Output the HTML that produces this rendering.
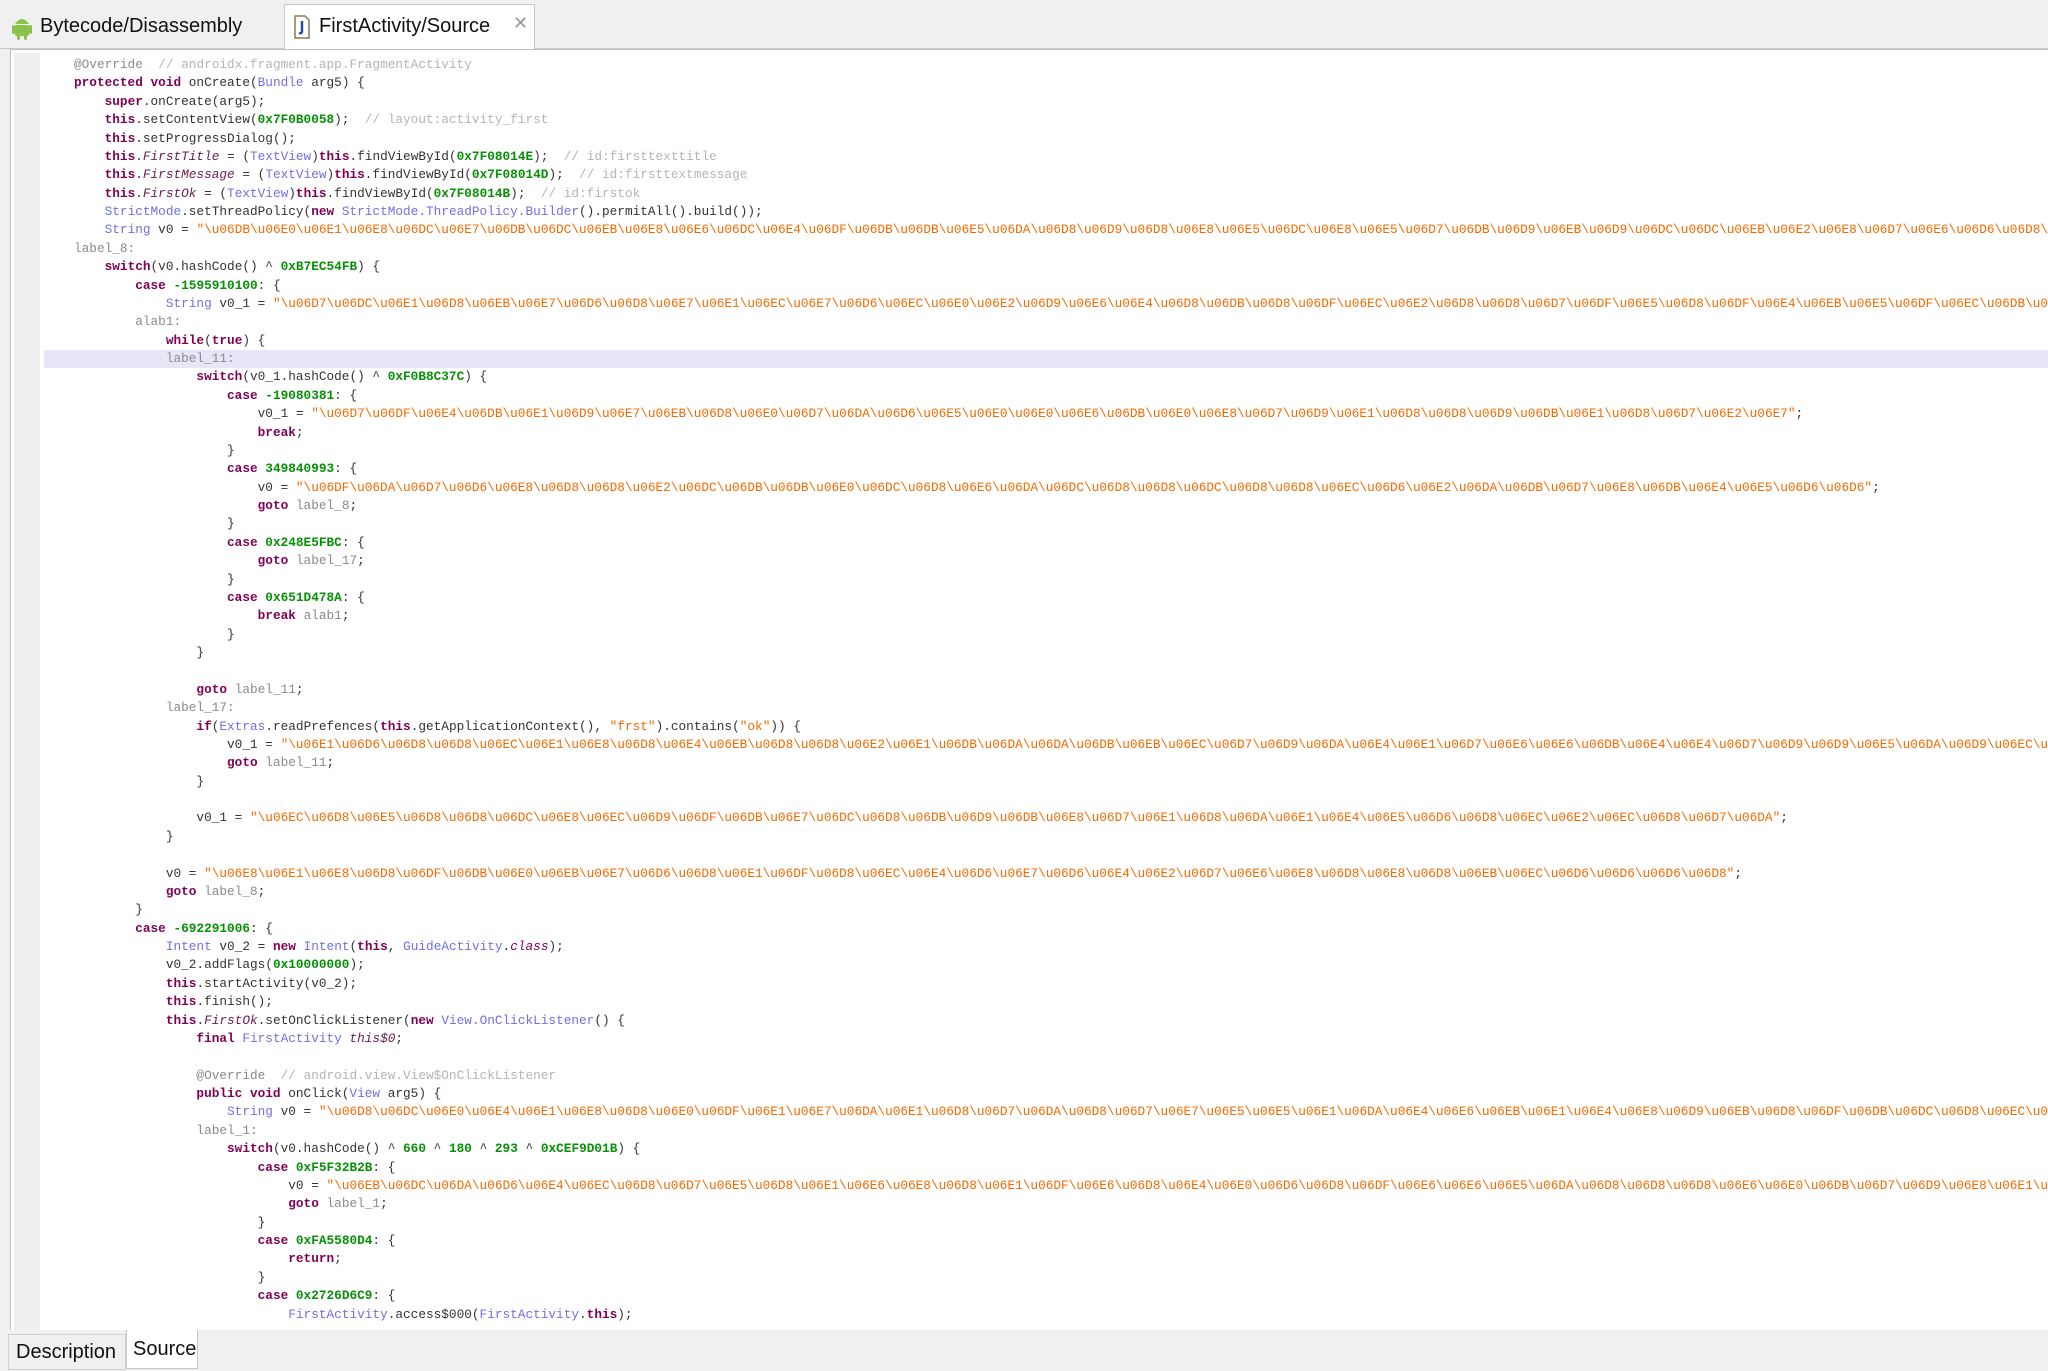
<!DOCTYPE html>
<html><head><meta charset="utf-8">
<style>
html,body{margin:0;padding:0;width:2048px;height:1371px;overflow:hidden;background:#f0f0f0;font-family:"Liberation Sans",sans-serif;}
#tabs{position:absolute;left:0;top:0;width:2048px;height:48px;background:#f0f0f0;border-bottom:1px solid #c8c8c8;}
.tab{position:absolute;top:5px;height:42px;font-size:20px;color:#111;line-height:42px;}
#t1{left:10px;width:272px;}
#t2{left:284px;width:249px;background:#fff;border:1px solid #c8c8c8;border-bottom:none;top:4px;height:44px;}
#editor{position:absolute;left:10px;top:49px;width:2040px;height:1281px;background:#fff;border:1px solid #c0c0c0;border-right:none;overflow:hidden;}
#gutter{position:absolute;left:3px;top:3px;width:26px;height:1278px;background:#efefef;}
#hl{position:absolute;left:33px;top:300px;width:2010px;height:18.4px;background:#e6e6f8;}
pre{position:absolute;left:63px;top:6px;margin:0;font-family:"Liberation Mono",monospace;font-size:12.75px;line-height:18.38px;color:#333;white-space:pre;}
.k{color:#7f0055;font-weight:bold}
.t{color:#6f6fe6}
.n{color:#079007;font-weight:bold}
.s{color:#f36a00}
.c{color:#b4b4b4}
.l{color:#8a8a8a}
.f{color:#6a2050;font-style:italic}
#btabs{position:absolute;left:0;top:1330px;width:2048px;height:41px;background:#f0f0f0;}
.bt{position:absolute;top:4px;height:34px;line-height:34px;font-size:20px;color:#111;}
</style></head><body>
<div id="tabs">
 <div class="tab" id="t1">
  <svg style="position:absolute;left:2px;top:9px" width="20" height="26" viewBox="0 0 20 26"><path d="M3 10 Q10 0 17 10 Z" fill="#8bc34a"/><rect x="3" y="11" width="14" height="11" rx="2" fill="#8bc34a"/><rect x="0" y="11" width="3" height="9" rx="1.5" fill="#8bc34a"/><rect x="17" y="11" width="3" height="9" rx="1.5" fill="#8bc34a"/><rect x="5" y="20" width="3" height="6" rx="1.5" fill="#8bc34a"/><rect x="12" y="20" width="3" height="6" rx="1.5" fill="#8bc34a"/></svg>
  <span style="position:absolute;left:30px">Bytecode/Disassembly</span></div>
 <div class="tab" id="t2">
  <svg style="position:absolute;left:8px;top:10px" width="18" height="24" viewBox="0 0 18 24"><path d="M2 1 H12 L16 5 V23 H2 Z" fill="#fff" stroke="#8a7a50" stroke-width="1.5"/><path d="M9 6 V16 Q9 19 6 18" fill="none" stroke="#2a4aa0" stroke-width="2.5"/></svg>
  <span style="position:absolute;left:34px">FirstActivity/Source</span>
  <span style="position:absolute;left:228px;top:-3px;font-size:18px;color:#999">✕</span></div>
</div>
<div id="editor">
<div id="gutter"></div>
<div id="hl"></div>
<pre><span class="l">@Override</span>  <span class="c">// androidx.fragment.app.FragmentActivity</span>
<span class="k">protected void</span> onCreate(<span class="t">Bundle</span> arg5) {
    <span class="k">super</span>.onCreate(arg5);
    <span class="k">this</span>.setContentView(<span class="n">0x7F0B0058</span>);  <span class="c">// layout:activity_first</span>
    <span class="k">this</span>.setProgressDialog();
    <span class="k">this</span>.<span class="f">FirstTitle</span> = (<span class="t">TextView</span>)<span class="k">this</span>.findViewById(<span class="n">0x7F08014E</span>);  <span class="c">// id:firsttexttitle</span>
    <span class="k">this</span>.<span class="f">FirstMessage</span> = (<span class="t">TextView</span>)<span class="k">this</span>.findViewById(<span class="n">0x7F08014D</span>);  <span class="c">// id:firsttextmessage</span>
    <span class="k">this</span>.<span class="f">FirstOk</span> = (<span class="t">TextView</span>)<span class="k">this</span>.findViewById(<span class="n">0x7F08014B</span>);  <span class="c">// id:firstok</span>
    <span class="t">StrictMode</span>.setThreadPolicy(<span class="k">new</span> <span class="t">StrictMode.ThreadPolicy.Builder</span>().permitAll().build());
    <span class="t">String</span> v0 = <span class="s">"\u06DB\u06E0\u06E1\u06E8\u06DC\u06E7\u06DB\u06DC\u06EB\u06E8\u06E6\u06DC\u06E4\u06DF\u06DB\u06DB\u06E5\u06DA\u06D8\u06D9\u06D8\u06E8\u06E5\u06DC\u06E8\u06E5\u06D7\u06DB\u06D9\u06EB\u06D9\u06DC\u06DC\u06EB\u06E2\u06E8\u06D7\u06E6\u06D6\u06D8\u06E7\u06E1"</span>;
<span class="l">label_8:</span>
    <span class="k">switch</span>(v0.hashCode() ^ <span class="n">0xB7EC54FB</span>) {
        <span class="k">case</span> <span class="n">-1595910100</span>: {
            <span class="t">String</span> v0_1 = <span class="s">"\u06D7\u06DC\u06E1\u06D8\u06EB\u06E7\u06D6\u06D8\u06E7\u06E1\u06EC\u06E7\u06D6\u06EC\u06E0\u06E2\u06D9\u06E6\u06E4\u06D8\u06DB\u06D8\u06DF\u06EC\u06E2\u06D8\u06D8\u06D7\u06DF\u06E5\u06D8\u06DF\u06E4\u06EB\u06E5\u06DF\u06EC\u06DB\u06E8\u06D7\u06E1"</span>;
        <span class="l">alab1:</span>
            <span class="k">while</span>(<span class="k">true</span>) {
            <span class="l">label_11:</span>
                <span class="k">switch</span>(v0_1.hashCode() ^ <span class="n">0xF0B8C37C</span>) {
                    <span class="k">case</span> <span class="n">-19080381</span>: {
                        v0_1 = <span class="s">"\u06D7\u06DF\u06E4\u06DB\u06E1\u06D9\u06E7\u06EB\u06D8\u06E0\u06D7\u06DA\u06D6\u06E5\u06E0\u06E0\u06E6\u06DB\u06E0\u06E8\u06D7\u06D9\u06E1\u06D8\u06D8\u06D9\u06DB\u06E1\u06D8\u06D7\u06E2\u06E7"</span>;
                        <span class="k">break</span>;
                    }
                    <span class="k">case</span> <span class="n">349840993</span>: {
                        v0 = <span class="s">"\u06DF\u06DA\u06D7\u06D6\u06E8\u06D8\u06D8\u06E2\u06DC\u06DB\u06DB\u06E0\u06DC\u06D8\u06E6\u06DA\u06DC\u06D8\u06D8\u06DC\u06D8\u06D8\u06EC\u06D6\u06E2\u06DA\u06DB\u06D7\u06E8\u06DB\u06E4\u06E5\u06D6\u06D6"</span>;
                        <span class="k">goto</span> <span class="l">label_8</span>;
                    }
                    <span class="k">case</span> <span class="n">0x248E5FBC</span>: {
                        <span class="k">goto</span> <span class="l">label_17</span>;
                    }
                    <span class="k">case</span> <span class="n">0x651D478A</span>: {
                        <span class="k">break</span> <span class="l">alab1</span>;
                    }
                }

                <span class="k">goto</span> <span class="l">label_11</span>;
            <span class="l">label_17:</span>
                <span class="k">if</span>(<span class="t">Extras</span>.readPrefences(<span class="k">this</span>.getApplicationContext(), <span class="s">"frst"</span>).contains(<span class="s">"ok"</span>)) {
                    v0_1 = <span class="s">"\u06E1\u06D6\u06D8\u06D8\u06EC\u06E1\u06E8\u06D8\u06E4\u06EB\u06D8\u06D8\u06E2\u06E1\u06DB\u06DA\u06DA\u06DB\u06EB\u06EC\u06D7\u06D9\u06DA\u06E4\u06E1\u06D7\u06E6\u06E6\u06DB\u06E4\u06E4\u06D7\u06D9\u06D9\u06E5\u06DA\u06D9\u06EC\u06E1\u06D8"</span>;
                    <span class="k">goto</span> <span class="l">label_11</span>;
                }

                v0_1 = <span class="s">"\u06EC\u06D8\u06E5\u06D8\u06D8\u06DC\u06E8\u06EC\u06D9\u06DF\u06DB\u06E7\u06DC\u06D8\u06DB\u06D9\u06DB\u06E8\u06D7\u06E1\u06D8\u06DA\u06E1\u06E4\u06E5\u06D6\u06D8\u06EC\u06E2\u06EC\u06D8\u06D7\u06DA"</span>;
            }

            v0 = <span class="s">"\u06E8\u06E1\u06E8\u06D8\u06DF\u06DB\u06E0\u06EB\u06E7\u06D6\u06D8\u06E1\u06DF\u06D8\u06EC\u06E4\u06D6\u06E7\u06D6\u06E4\u06E2\u06D7\u06E6\u06E8\u06D8\u06E8\u06D8\u06EB\u06EC\u06D6\u06D6\u06D6\u06D8"</span>;
            <span class="k">goto</span> <span class="l">label_8</span>;
        }
        <span class="k">case</span> <span class="n">-692291006</span>: {
            <span class="t">Intent</span> v0_2 = <span class="k">new</span> <span class="t">Intent</span>(<span class="k">this</span>, <span class="t">GuideActivity</span>.<span class="f" style="color:#7f0055">class</span>);
            v0_2.addFlags(<span class="n">0x10000000</span>);
            <span class="k">this</span>.startActivity(v0_2);
            <span class="k">this</span>.finish();
            <span class="k">this</span>.<span class="f">FirstOk</span>.setOnClickListener(<span class="k">new</span> <span class="t">View.OnClickListener</span>() {
                <span class="k">final</span> <span class="t">FirstActivity</span> <span class="f">this$0</span>;

                <span class="l">@Override</span>  <span class="c">// android.view.View$OnClickListener</span>
                <span class="k">public void</span> onClick(<span class="t">View</span> arg5) {
                    <span class="t">String</span> v0 = <span class="s">"\u06D8\u06DC\u06E0\u06E4\u06E1\u06E8\u06D8\u06E0\u06DF\u06E1\u06E7\u06DA\u06E1\u06D8\u06D7\u06DA\u06D8\u06D7\u06E7\u06E5\u06E5\u06E1\u06DA\u06E4\u06E6\u06EB\u06E1\u06E4\u06E8\u06D9\u06EB\u06D8\u06DF\u06DB\u06DC\u06D8\u06EC\u06E1"</span>;
                <span class="l">label_1:</span>
                    <span class="k">switch</span>(v0.hashCode() ^ <span class="n">660</span> ^ <span class="n">180</span> ^ <span class="n">293</span> ^ <span class="n">0xCEF9D01B</span>) {
                        <span class="k">case</span> <span class="n">0xF5F32B2B</span>: {
                            v0 = <span class="s">"\u06EB\u06DC\u06DA\u06D6\u06E4\u06EC\u06D8\u06D7\u06E5\u06D8\u06E1\u06E6\u06E8\u06D8\u06E1\u06DF\u06E6\u06D8\u06E4\u06E0\u06D6\u06D8\u06DF\u06E6\u06E6\u06E5\u06DA\u06D8\u06D8\u06D8\u06E6\u06E0\u06DB\u06D7\u06D9\u06E8\u06E1\u06D8"</span>;
                            <span class="k">goto</span> <span class="l">label_1</span>;
                        }
                        <span class="k">case</span> <span class="n">0xFA5580D4</span>: {
                            <span class="k">return</span>;
                        }
                        <span class="k">case</span> <span class="n">0x2726D6C9</span>: {
                            <span class="t">FirstActivity</span>.access$000(<span class="t">FirstActivity</span>.<span class="k">this</span>);
</pre>
</div>
<div id="btabs">
 <div class="bt" style="left:8px;width:116px;border:1px solid #d0d0d0;"><span style="padding-left:7px">Description</span></div>
 <div class="bt" style="left:126px;width:70px;background:#fff;border:1px solid #c8c8c8;border-top:none;top:0;height:38px;line-height:38px;"><span style="padding-left:6px">Source</span></div>
</div>
</body></html>
